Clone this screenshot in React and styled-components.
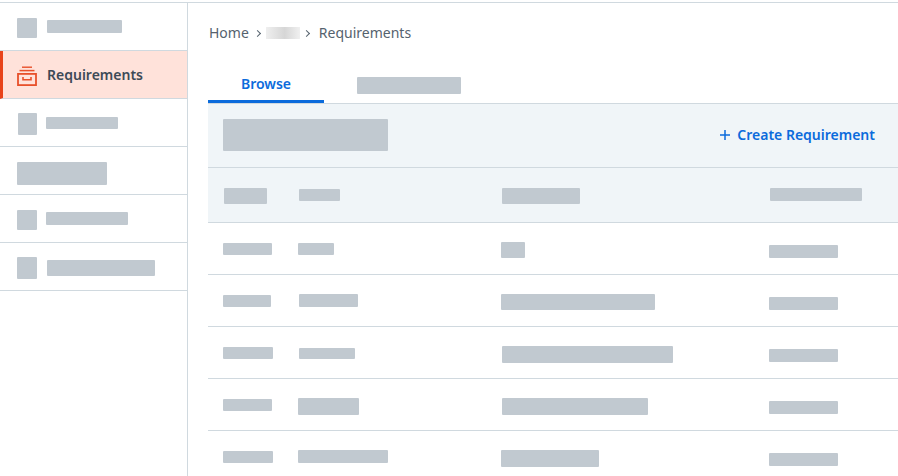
import React from "react";
import styled, { createGlobalStyle } from "styled-components";

const navItems = [
  [{ x: 17, y: 15, w: 20, h: 20 }, { x: 10, y: 17, w: 75, h: 13 }],
  null,
  [{ x: 18, y: 14, w: 19, h: 22 }, { x: 9, y: 18, w: 72, h: 12 }],
  [{ x: 17, y: 15, w: 90, h: 23 }],
  [{ x: 17, y: 15, w: 20, h: 20 }, { x: 9, y: 17, w: 82, h: 13 }],
  [{ x: 17, y: 14, w: 20, h: 22 }, { x: 10, y: 17, w: 108, h: 16 }],
];

const headerCells = [
  { x: 1, y: 20, w: 43, h: 16 },
  { x: 1, y: 21, w: 41, h: 12 },
  { x: 1, y: 20, w: 78, h: 16 },
  { x: 1, y: 20, w: 92, h: 13 },
];

const rows = [
  [
    { x: 0, y: 20, w: 49, h: 12 },
    { x: 0, y: 20, w: 36, h: 12 },
    { x: 0, y: 19, w: 24, h: 16 },
    { x: 0, y: 22, w: 69, h: 13 },
  ],
  [
    { x: 0, y: 20, w: 48, h: 12 },
    { x: 1, y: 19, w: 59, h: 13 },
    { x: 0, y: 19, w: 154, h: 16 },
    { x: 0, y: 22, w: 69, h: 13 },
  ],
  [
    { x: 0, y: 20, w: 50, h: 12 },
    { x: 1, y: 21, w: 56, h: 11 },
    { x: 1, y: 19, w: 171, h: 17 },
    { x: 0, y: 22, w: 69, h: 13 },
  ],
  [
    { x: 0, y: 20, w: 49, h: 12 },
    { x: 0, y: 19, w: 61, h: 17 },
    { x: 1, y: 19, w: 146, h: 17 },
    { x: 0, y: 22, w: 69, h: 13 },
  ],
  [
    { x: 0, y: 20, w: 50, h: 12 },
    { x: 0, y: 19, w: 90, h: 13 },
    { x: 0, y: 19, w: 98, h: 17 },
    { x: 0, y: 22, w: 69, h: 13 },
  ],
];

const App = () => {
  return (
    <Page>
      <GlobalStyle />
      <Sidebar>
        {navItems.map((bars, index) =>
          bars ? (
            <NavItem key={index}>
              {bars.map((bar, barIndex) => (
                <Bar key={barIndex} $x={bar.x} $y={bar.y} $w={bar.w} $h={bar.h} />
              ))}
            </NavItem>
          ) : (
            <ActiveNavItem key={index}>
              <NavIcon width="20" height="20" viewBox="0 0 20 20" fill="none" stroke="#e8502a">
                <path d="M5 1.2h10" strokeWidth="1.4" />
                <path d="M2.5 4.6h15" strokeWidth="1.5" />
                <rect x="1" y="7.9" width="18" height="11.2" strokeWidth="1.8" />
                <path d="M6 11v2.8h8V11" strokeWidth="1.6" />
              </NavIcon>
              <NavLabel>Requirements</NavLabel>
            </ActiveNavItem>
          )
        )}
      </Sidebar>

      <Main>
        <Breadcrumb>
          <span>Home</span>
          <Chevron $left={6} />
          <BlurredCrumb />
          <Chevron $left={4} />
          <CurrentCrumb>Requirements</CurrentCrumb>
        </Breadcrumb>

        <Tabs>
          <ActiveTab>Browse</ActiveTab>
          <Bar $x={33} $y={14} $w={104} $h={17} />
        </Tabs>

        <Toolbar>
          <Bar $x={15} $y={0} $w={165} $h={32} />
          <CreateButton>
            <svg width="10" height="10" viewBox="0 0 10 10" stroke="#0b6bdc" strokeWidth="1.5">
              <path d="M5 0v10M0 5h10" />
            </svg>
            Create Requirement
          </CreateButton>
        </Toolbar>

        <HeaderRow>
          {headerCells.map((cell, index) => (
            <Bar key={index} $x={cell.x} $y={cell.y} $w={cell.w} $h={cell.h} />
          ))}
        </HeaderRow>

        {rows.map((row, rowIndex) => (
          <Row key={rowIndex}>
            {row.map((cell, index) => (
              <Bar key={index} $x={cell.x} $y={cell.y} $w={cell.w} $h={cell.h} />
            ))}
          </Row>
        ))}
      </Main>
    </Page>
  );
};

const GlobalStyle = createGlobalStyle`
  html, body {
    margin: 0;
    height: 476px;
    overflow: hidden;
    background: #fff;
  }
`;

const Page = styled.div`
  display: flex;
  height: 476px;
  box-sizing: border-box;
  margin-top: 2px;
  border-top: 1px solid #d0d9df;
  font-family: "Noto Sans", "Open Sans", sans-serif;
  font-size: 14px;
  overflow: hidden;
`;

const Sidebar = styled.nav`
  flex: 0 0 188px;
  box-sizing: border-box;
  border-right: 1px solid #d0d9df;
`;

const NavItem = styled.div`
  display: flex;
  align-items: flex-start;
  height: 48px;
  box-sizing: border-box;
  border-bottom: 1px solid #d0d9df;
`;

const ActiveNavItem = styled.div`
  display: flex;
  align-items: center;
  height: 48px;
  box-sizing: border-box;
  padding-left: 14px;
  background: #ffe2da;
  border-left: 3px solid #e8431a;
  border-bottom: 1px solid #d0d9df;
`;

const NavIcon = styled.svg`
  margin-top: 2px;
`;

const NavLabel = styled.span`
  margin-left: 10px;
  font-weight: 600;
  color: #3d4a57;
  line-height: 20px;
`;

const Bar = styled.div`
  flex: none;
  justify-self: start;
  margin-left: ${(props) => props.$x}px;
  margin-top: ${(props) => props.$y}px;
  width: ${(props) => props.$w}px;
  height: ${(props) => props.$h}px;
  border-radius: 1px;
  background: #c1c9d0;
`;

const Main = styled.main`
  flex: 1;
  min-width: 0;
  padding-left: 20px;
`;

const Breadcrumb = styled.div`
  display: flex;
  align-items: center;
  height: 60px;
  padding-left: 1px;
  color: #55626e;
  line-height: 20px;
`;

const Chevron = styled.i`
  width: 4px;
  height: 4px;
  margin: 0 6px 0 ${(props) => props.$left}px;
  border-top: 1px solid #55626e;
  border-right: 1px solid #55626e;
  transform: rotate(45deg);
`;

const BlurredCrumb = styled.div`
  width: 34px;
  height: 12px;
  background: linear-gradient(90deg, #efefef, #d6d6d6 55%, #f0f0f0);
`;

const CurrentCrumb = styled.span`
  margin-left: 4px;
`;

const Tabs = styled.div`
  display: flex;
  height: 41px;
  box-sizing: border-box;
  border-bottom: 1px solid #d0d9df;
`;

const ActiveTab = styled.div`
  width: 116px;
  height: 40px;
  box-sizing: border-box;
  padding-top: 11px;
  border-bottom: 3px solid #0b6bdc;
  text-align: center;
  color: #0b6bdc;
  font-weight: 600;
  line-height: 20px;
`;

const Toolbar = styled.div`
  display: flex;
  align-items: center;
  justify-content: space-between;
  height: 64px;
  box-sizing: border-box;
  padding-right: 23px;
  padding-bottom: 1px;
  background: #f0f5f8;
  border-bottom: 1px solid #d0d9df;
`;

const CreateButton = styled.div`
  display: flex;
  align-items: center;
  gap: 7px;
  color: #0b6bdc;
  font-weight: 600;
  line-height: 20px;
`;

const Row = styled.div`
  display: grid;
  grid-template-columns: 75px 203px 268px 1fr;
  align-items: start;
  height: 52px;
  box-sizing: border-box;
  padding-left: 15px;
  border-bottom: 1px solid #d0d9df;
`;

const HeaderRow = styled(Row)`
  height: 55px;
  background: #f0f5f8;
`;

export default App;
